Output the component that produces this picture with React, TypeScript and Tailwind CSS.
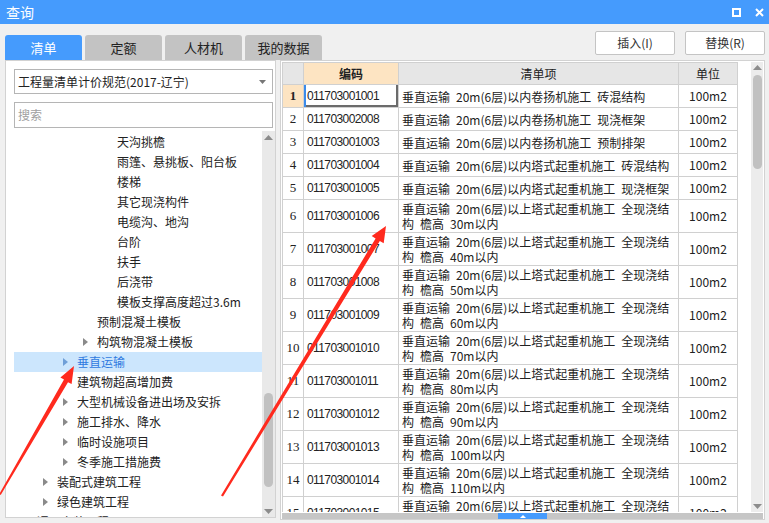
import React from 'react';

const cjk = "font-['Microsoft_YaHei','Noto_Sans_CJK_SC',sans-serif]";

type TreeItem = { level: 0 | 1 | 2 | 3 | 4; label: string; arrow?: boolean; selected?: boolean };

const tree: TreeItem[] = [
    { level: 4, label: '天沟挑檐' },
    { level: 4, label: '雨篷、悬挑板、阳台板' },
    { level: 4, label: '楼梯' },
    { level: 4, label: '其它现浇构件' },
    { level: 4, label: '电缆沟、地沟' },
    { level: 4, label: '台阶' },
    { level: 4, label: '扶手' },
    { level: 4, label: '后浇带' },
    { level: 4, label: '模板支撑高度超过3.6m' },
    { level: 3, label: '预制混凝土模板' },
    { level: 3, label: '构筑物混凝土模板', arrow: true },
    { level: 2, label: '垂直运输', arrow: true, selected: true },
    { level: 2, label: '建筑物超高增加费' },
    { level: 2, label: '大型机械设备进出场及安拆', arrow: true },
    { level: 2, label: '施工排水、降水', arrow: true },
    { level: 2, label: '临时设施项目', arrow: true },
    { level: 2, label: '冬季施工措施费', arrow: true },
    { level: 1, label: '装配式建筑工程', arrow: true },
    { level: 1, label: '绿色建筑工程', arrow: true },
    { level: 0, label: '通用安装工程', arrow: true },
];

const indent: Record<number, string> = {
    0: 'pl-[9px]',
    1: 'pl-[29px]',
    2: 'pl-[49px]',
    3: 'pl-[69px]',
    4: 'pl-[89px]',
};

type Row = { code: string; lines: string[] };

// en-space keeps the wide gaps of the original font
const sp = '\u2002';
const pre = '垂直运输' + sp + '20m(6层)';
const tall = (n: string) => [pre + '以上塔式起重机施工' + sp + '全现浇结', '构' + sp + '檐高' + sp + n + '以内'];

const rows: Row[] = [
    { code: '011703001001', lines: [pre + '以内卷扬机施工' + sp + '砖混结构'] },
    { code: '011703002008', lines: [pre + '以内卷扬机施工' + sp + '现浇框架'] },
    { code: '011703001003', lines: [pre + '以内卷扬机施工' + sp + '预制排架'] },
    { code: '011703001004', lines: [pre + '以内塔式起重机施工' + sp + '砖混结构'] },
    { code: '011703001005', lines: [pre + '以内塔式起重机施工' + sp + '现浇框架'] },
    { code: '011703001006', lines: tall('30m') },
    { code: '011703001007', lines: tall('40m') },
    { code: '011703001008', lines: tall('50m') },
    { code: '011703001009', lines: tall('60m') },
    { code: '011703001010', lines: tall('70m') },
    { code: '011703001011', lines: tall('80m') },
    { code: '011703001012', lines: tall('90m') },
    { code: '011703001013', lines: tall('100m') },
    { code: '011703001014', lines: tall('110m') },
    { code: '011703001015', lines: tall('120m') },
];

function Caret({ blue }: { blue?: boolean }) {
    return (
        <svg width="6" height="8" viewBox="0 0 6 8">
            <path d="M0 0 L5 4 L0 8 Z" fill={blue ? '#6f9fd8' : '#8a8a8a'} />
        </svg>
    );
}

function ScrollArrow({ down }: { down?: boolean }) {
    return (
        <svg width="9" height="5" viewBox="0 0 9 5">
            <path d={down ? 'M0 0 L9 0 L4.5 5 Z' : 'M0 5 L9 5 L4.5 0 Z'} fill="#8c8c8c" />
        </svg>
    );
}

function Arrows() {
    return (
        <svg className="absolute inset-0 pointer-events-none" width="769" height="523" viewBox="0 0 769 523">
            <polygon
                fill="#ff2a1e"
                points="74,366 71.6,384.1 68,382.3 0.7,495 -0.7,494 64,379.6 60.4,377.5"
            />
            <polygon
                fill="#ff2a1e"
                points="386,226 383.7,243.3 379.8,241 223,496.5 221,495.5 375.6,238.4 371.7,236.1"
            />
        </svg>
    );
}

export default function App() {
    return (
        <div className={`relative w-[769px] h-[523px] overflow-hidden bg-[#f0f0f0] text-[#222] ${cjk}`}>
            {/* Title bar */}
            <div className="h-[24px] bg-[#459bfd] flex items-center justify-between pl-[6px] pr-[5px]">
                <span className="text-white text-[14px] leading-none">查询</span>
                <div className="flex items-center gap-[14px]">
                    <div className="w-[9px] h-[9px] border-2 border-white" />
                    <svg width="9" height="9" viewBox="0 0 9 9">
                        <path d="M1 1 L8 8 M8 1 L1 8" stroke="white" strokeWidth="2" />
                    </svg>
                </div>
            </div>

            {/* Tabs & buttons */}
            <div className="h-[36px] flex pl-[5px] pr-[4px]">
                <div className="flex gap-[3px] self-end">
                    <div className="w-[77px] h-[25px] rounded-t-[3px] bg-[#459bfd] text-white text-[13px] flex items-center justify-center">清单</div>
                    <div className="w-[77px] h-[25px] rounded-t-[3px] bg-[#c3c3c3] text-[13px] flex items-center justify-center">定额</div>
                    <div className="w-[77px] h-[25px] rounded-t-[3px] bg-[#c3c3c3] text-[13px] flex items-center justify-center">人材机</div>
                    <div className="w-[77px] h-[25px] rounded-t-[3px] bg-[#c3c3c3] text-[13px] flex items-center justify-center">我的数据</div>
                </div>
                <div className="ml-auto flex gap-[10px] mt-[7px]">
                    <button className="w-[80px] h-[24px] bg-white border border-[#c4c4c4] rounded-[2px] text-[12px] text-[#333]">插入(I)</button>
                    <button className="w-[80px] h-[24px] bg-white border border-[#c4c4c4] rounded-[2px] text-[12px] text-[#333]">替换(R)</button>
                </div>
            </div>

            {/* Body */}
            <div className="flex gap-[4px] pl-[5px]">
                {/* Left panel */}
                <div className="w-[271px] h-[458px] bg-white border border-[#d2d2d2] flex flex-col pt-[8px] pl-[8px]">
                    <div className="w-[259px] h-[25px] border border-[#b5b5b5] flex items-center justify-between pl-[3px] pr-[6px] text-[12px]">
                        <span>工程量清单计价规范(2017-辽宁)</span>
                        <svg width="7" height="4" viewBox="0 0 7 4">
                            <path d="M0 0 L7 0 L3.5 4 Z" fill="#777" />
                        </svg>
                    </div>
                    <div className="w-[259px] h-[26px] mt-[8px] border border-[#b5b5b5] flex items-center pl-[3px] text-[12px] text-[#a0a0a0]">
                        搜索
                    </div>
                    <div className="flex flex-1 mt-[3px] overflow-hidden">
                        <div className="flex-1 pt-[1px] overflow-hidden">
                            {tree.map((t) => (
                                <div
                                    key={t.label}
                                    className={`h-[20px] flex items-center text-[12px] whitespace-nowrap ${indent[t.level]} ${
                                        t.selected ? 'bg-[#cce6fd] text-[#2f7ae0]' : ''
                                    }`}
                                >
                                    <span className="w-[14px] flex items-center">{t.arrow && <Caret blue={t.selected} />}</span>
                                    <span>{t.label}</span>
                                </div>
                            ))}
                        </div>
                        <div className="w-[13px] bg-[#e9e9e9] flex flex-col items-center">
                            <div className="h-[12px] flex items-center">
                                <ScrollArrow />
                            </div>
                            <div className="h-[250px]" />
                            <div className="w-[9px] h-[94px] rounded-full bg-[#c1c1c1]" />
                            <div className="flex-1" />
                            <div className="h-[12px] flex items-center">
                                <ScrollArrow down />
                            </div>
                        </div>
                    </div>
                </div>

                {/* Right panel */}
                <div className="w-[485px] h-[460px] bg-white border border-[#d2d2d2] pl-[1px] pt-[1px] flex flex-col">
                    <div className="flex h-[450px]">
                        <div className="w-[469px] overflow-hidden">
                            <div className="w-[456px] border-l border-t border-[#d0d0d0]">
                                <div className="grid grid-cols-[21px_95px_280px_59px] h-[22px] text-[12px]">
                                    <div className="bg-[#e6e6e6] border-r border-b border-[#d0d0d0]" />
                                    <div className="bg-[#fde4c2] border-r border-b border-[#d0d0d0] flex items-center justify-center font-bold">编码</div>
                                    <div className="bg-[#e6e6e6] border-r border-b border-[#d0d0d0] flex items-center justify-center">清单项</div>
                                    <div className="bg-[#e6e6e6] border-r border-b border-[#d0d0d0] flex items-center justify-center">单位</div>
                                </div>
                                {rows.map((r, i) => (
                                    <div
                                        key={r.code}
                                        className={`grid grid-cols-[21px_95px_280px_59px] ${r.lines.length > 1 ? 'h-[33px]' : 'h-[23px]'}`}
                                    >
                                        <div
                                            className={`border-r border-b border-[#d0d0d0] flex items-center justify-center font-['Liberation_Serif',serif] text-[13px] ${
                                                i === 0 ? 'bg-[#fde4c2] font-bold' : ''
                                            }`}
                                        >
                                            {i + 1}
                                        </div>
                                        <div
                                            className={`border-r border-b border-[#d0d0d0] flex items-center pl-[3px] font-['Liberation_Sans',sans-serif] text-[12px] tracking-[-0.6px] ${
                                                i === 0 ? 'shadow-[inset_2px_0_0_#3b8bea,inset_-2px_-2px_0_#6b6b6b]' : ''
                                            }`}
                                        >
                                            {r.code}
                                        </div>
                                        <div className="border-r border-b border-[#d0d0d0] flex flex-col justify-center pl-[3px] text-[12px] leading-[15px] whitespace-nowrap">
                                            {r.lines.map((l) => (
                                                <span key={l} className="block h-[15px]">{l}</span>
                                            ))}
                                        </div>
                                        <div className="border-r border-b border-[#d0d0d0] flex items-center justify-center text-[12px]">100m2</div>
                                    </div>
                                ))}
                            </div>
                        </div>
                        <div className="w-[12px] bg-[#ececec] flex flex-col items-center">
                            <div className="h-[11px] flex items-center">
                                <ScrollArrow />
                            </div>
                            <div className="w-[9px] h-[94px] mt-[2px] rounded-full bg-[#c1c1c1]" />
                            <div className="flex-1" />
                            <div className="h-[12px] flex items-center">
                                <ScrollArrow down />
                            </div>
                        </div>
                    </div>
                    <div className="h-[6px] mt-[1px] w-[481px] bg-[#c6c6c6] flex">
                        <div className="ml-[216px] w-[49px] h-[6px] bg-[#459bfd] flex items-center justify-center">
                            <svg width="6" height="3" viewBox="0 0 6 3">
                                <path d="M0 3 L6 3 L3 0 Z" fill="white" />
                            </svg>
                        </div>
                    </div>
                </div>
            </div>

            <Arrows />
        </div>
    );
}
